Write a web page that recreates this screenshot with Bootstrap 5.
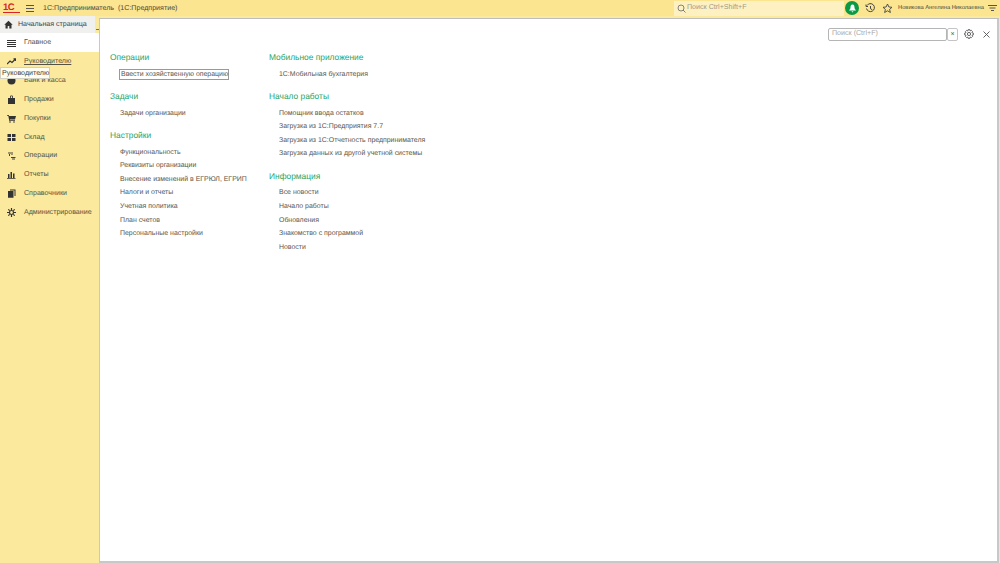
<!DOCTYPE html>
<html lang="ru"><head><meta charset="utf-8"><title>1С</title>
<link href="https://cdn.jsdelivr.net/npm/bootstrap@5.3.0/dist/css/bootstrap.min.css" rel="stylesheet">
<style>
html,body{height:563px;overflow:hidden}
body{background:#fbe99d;font-family:"Liberation Sans",Arial,sans-serif;font-size:7px;color:#4a4a4a;line-height:1;text-rendering:geometricPrecision}
.shell{width:1000px;height:563px;position:relative}
.topbar{height:16px;background:#fbe591}
.logo-txt{color:#d8232a;font-weight:700;font-size:9.5px;width:17px;margin-left:3px;letter-spacing:-.5px;border-bottom:1px solid #d8232a;line-height:9px}
.burger{width:8px;height:7px;margin-left:6px;border-top:1px solid #555;border-bottom:1px solid #555;position:relative}
.burger::after{content:"";position:absolute;left:0;right:0;top:2px;height:1px;background:#555}
.app-title{margin-left:9px;font-size:7.1px;color:#4a4a40;padding-top:1px}
.top-search{width:170px;height:15px;background:#fdf1c1;color:#9a9a8a;font-size:7.1px;padding-left:3px;gap:1px}
.bell{width:14px;height:14px;border-radius:50%;background:#0a9a45;margin-left:1px}
.user-name{font-size:5.75px;color:#4a4a40;margin-left:5px;width:90px;white-space:nowrap;padding-top:1px}
.work{height:547px}
.side{width:99px;flex:none}
.home-tab{height:17px;width:95px;background:#f0f0ee;font-size:7.1px;color:#444;padding-left:4px;gap:5px}
.side-item{height:18.8px;padding-left:7px;gap:8px;font-size:7.1px;color:#55523f;white-space:nowrap;padding-top:1px}
.side-item svg{flex:none}
.side-item.on{background:#fff;height:19px}
.u-line{text-decoration:underline}
.panel-wrap{flex:1;min-width:0;padding:2px 1px 0 0}
.panel{height:545px;background:#fff;border:1px solid #c8c8c8;border-right-width:2px;border-bottom-width:2px;border-top-color:#bdbdbd}
.tool-row{height:14px;margin-top:8px;padding-right:7px}
.find{width:119px;height:13px;border:1px solid #b5b5b5;border-radius:2px;color:#a8a8a8;font-size:7.1px;padding-left:3px}
.find-x{width:11px;height:13px;border:1px solid #c4c4c4;border-radius:2px;font-size:7px;color:#555}
.gear-wrap{margin-left:6px}
.close-x{margin-left:9px}
.cols{padding:10px 0 0 10px}
.col1{width:159px}
.sec-h{color:#1fa568;font-size:8.4px;height:12px;line-height:12px;margin-bottom:4.5px;white-space:nowrap}
.sec{margin-bottom:9px}
.lnk{height:13.6px;line-height:13.6px;padding-left:10px;font-size:6.95px;color:#5a564c;white-space:nowrap}
.lnk.boxed{display:inline-block;height:11px;line-height:9px;margin:1px 0 1.6px 9px;border:1px solid #999;padding:0 0 0 1px}
.lnk.bl{color:#465a72}
.tip{position:absolute;left:0;top:67px;width:50px;height:12px;background:#fffdf0;border:1px solid #d0d0c4;font-size:7.1px;color:#444;line-height:10px;padding-left:1px;white-space:nowrap}
.tab-tick{position:absolute;left:96px;top:29px;width:3px;height:1px;background:#18a060}
</style></head><body>
<div class="shell">
 <div class="topbar d-flex align-items-center">
  <span class="logo-txt">1С</span><span class="burger"></span>
  <span class="app-title">1С:Предприниматель &nbsp;(1С:Предприятие)</span>
  <div class="top-search d-flex align-items-center ms-auto">
   <svg width="9" height="9" viewBox="0 0 9 9" fill="none" stroke="#666" stroke-width=".8"><circle cx="4" cy="4" r="3"/><path d="M6 6l2.500 2.500"/></svg>Поиск Ctrl+Shift+F</div>
  <span class="bell d-flex align-items-center justify-content-center"><svg width="9" height="9" viewBox="0 0 9 9" fill="#fff"><path d="M4.500 .5C2.800 .5 2.500 2 2.500 3.500 2.500 5 1.500 5.500 1 6.500H8C7.500 5.500 6.500 5 6.500 3.500 6.500 2 6.200 .5 4.500 .5ZM3.500 7.200H5.500L4.500 8.600Z"/></svg></span>
  <svg style="margin-left:6px" width="11" height="11" viewBox="0 0 11 11" fill="none" stroke="#444" stroke-width="1"><path d="M2 2.500A4 4 0 1 1 1.500 5.500"/><path d="M1 1.500V3.500H3M5.500 3V5.700L7.300 6.800"/></svg>
  <svg style="margin-left:6px" width="11" height="11" viewBox="0 0 11 11" fill="none" stroke="#444" stroke-width=".9"><path d="M5.500 1l1.400 3 3.100.3-2.400 2.100.8 3.100-2.900-1.700-2.900 1.700.8-3.100L1 4.300 4.100 4z"/></svg>
  <span class="user-name">Новикова Ангелина Николаевна</span>
  <svg style="margin-right:3px" width="9" height="8" viewBox="0 0 9 8" stroke="#555" stroke-width="1"><path d="M0 1.500H9M1.500 4H7.500M3 6.500H6"/></svg>
 </div>
 <div class="work d-flex">
  <div class="side">
   <div class="home-tab d-flex align-items-center">
    <svg width="9" height="9" viewBox="0 0 9 9" fill="#333"><path d="M4.500 .8L.3 4.800H1.500V8.500H3.700V6H5.300V8.500H7.500V4.800H8.700Z"/></svg>Начальная страница</div>
   <div class="side-item on d-flex align-items-center">
    <svg width="9" height="9" viewBox="0 0 9 9" stroke="#333" stroke-width="1"><path d="M0 1.500H9M0 3.500H9M0 5.500H9M0 7.500H9"/></svg>Главное</div>
   <div class="side-item d-flex align-items-center">
    <svg width="9" height="9" viewBox="0 0 9 9" fill="none" stroke="#333" stroke-width="1.200"><path d="M0 7L3 4 5 5.500 8.500 2M6.500 1.800H8.700V4"/></svg><span class="u-line">Руководителю</span></div>
   <div class="side-item d-flex align-items-center">
    <svg width="9" height="9" viewBox="0 0 9 9" fill="#333"><circle cx="4.500" cy="4.500" r="4"/></svg>Банк и касса</div>
   <div class="side-item d-flex align-items-center">
    <svg width="9" height="9" viewBox="0 0 9 9" fill="#333"><path d="M1 3H8V9H1ZM3 3V1.500C3 .3 6 .3 6 1.500V3H5.200V1.600C5.200 1 3.800 1 3.800 1.600V3Z"/></svg>Продажи</div>
   <div class="side-item d-flex align-items-center">
    <svg width="9" height="9" viewBox="0 0 9 9" fill="#333"><path d="M0 1H1.800L2.100 2H9L8 5.500H2.800L3 6.300H8V7H2.300L1.300 1.700H0Z"/><circle cx="3" cy="8" r=".8"/><circle cx="7" cy="8" r=".8"/></svg>Покупки</div>
   <div class="side-item d-flex align-items-center">
    <svg width="9" height="9" viewBox="0 0 9 9" fill="#333"><path d="M.5 1H4V4H.5ZM5 1H8.500V4H5ZM.5 5H4V8H.5ZM5 5H8.500V8H5Z"/></svg>Склад</div>
   <div class="side-item d-flex align-items-center">
    <svg width="9" height="9" viewBox="0 0 9 9" fill="#444"><path d="M1 1.500H4V2.500H1ZM2 3H3V5H2ZM4 6H8.500V7H4ZM5 7.500H8V8.500H5ZM4.500 1H5.500V4H4.500Z"/></svg>Операции</div>
   <div class="side-item d-flex align-items-center">
    <svg width="9" height="9" viewBox="0 0 9 9" fill="#333"><path d="M1 4H2.500V8H1ZM3.500 2H5V8H3.500ZM6 3.500H7.500V8H6ZM0 8H8.500V8.700H0Z"/></svg>Отчеты</div>
   <div class="side-item d-flex align-items-center">
    <svg width="9" height="9" viewBox="0 0 9 9" fill="#333"><path d="M3 .5H8.500V7H7.500V1.500H3ZM1 2H6.500V8.800H1Z"/></svg>Справочники</div>
   <div class="side-item d-flex align-items-center">
    <svg width="9" height="9" viewBox="0 0 9 9" fill="none" stroke="#333" stroke-width="1.200"><circle cx="4.500" cy="4.500" r="2"/><path d="M4.500 0V2M4.500 7V9M0 4.500H2M7 4.500H9M1.300 1.300L2.700 2.700M6.300 6.300L7.700 7.700M1.300 7.700L2.700 6.300M6.300 2.700L7.700 1.300"/></svg>Администрирование</div>
  </div>
  <div class="panel-wrap">
   <div class="panel">
    <div class="tool-row d-flex align-items-center justify-content-end">
     <div class="find d-flex align-items-center">Поиск (Ctrl+F)</div>
     <div class="find-x d-flex align-items-center justify-content-center">×</div>
     <svg class="gear-wrap" width="10" height="10" viewBox="0 0 10 10" fill="none" stroke="#555" stroke-width=".9"><circle cx="5" cy="5" r="1.600"/><path d="M4.200 .6H5.800L6.100 1.900 7.300 1.300 8.500 2.500 7.900 3.700 9.400 4.200V5.800L8 6.200 8.600 7.400 7.400 8.600 6.200 8 5.800 9.400H4.200L3.800 8 2.600 8.600 1.400 7.400 2 6.200.6 5.800V4.200L2 3.800 1.400 2.600 2.600 1.400 3.800 2Z"/></svg>
     <svg class="close-x" width="7" height="7" viewBox="0 0 7 7" stroke="#555" stroke-width=".9"><path d="M.5 .5L6.500 6.500M6.500 .5L.5 6.500"/></svg>
    </div>
    <div class="cols d-flex">
     <div class="col1">
      <div class="sec"><div class="sec-h">Операции</div><div class="lnk boxed">Ввести хозяйственную операцию</div></div>
      <div class="sec"><div class="sec-h">Задачи</div><div class="lnk">Задачи организации</div></div>
      <div class="sec"><div class="sec-h">Настройки</div>
       <div class="lnk">Функциональность</div><div class="lnk">Реквизиты организации</div><div class="lnk">Внесение изменений в ЕГРЮЛ, ЕГРИП</div><div class="lnk bl">Налоги и отчеты</div><div class="lnk">Учетная политика</div><div class="lnk">План счетов</div><div class="lnk">Персональные настройки</div></div>
     </div>
     <div>
      <div class="sec"><div class="sec-h">Мобильное приложение</div><div class="lnk">1С:Мобильная бухгалтерия</div></div>
      <div class="sec"><div class="sec-h">Начало работы</div><div class="lnk">Помощник ввода остатков</div><div class="lnk">Загрузка из 1С:Предприятия 7.7</div><div class="lnk">Загрузка из 1С:Отчетность предпринимателя</div><div class="lnk">Загрузка данных из другой учетной системы</div></div>
      <div class="sec"><div class="sec-h">Информация</div><div class="lnk">Все новости</div><div class="lnk">Начало работы</div><div class="lnk">Обновления</div><div class="lnk">Знакомство с программой</div><div class="lnk">Новости</div></div>
     </div>
    </div>
   </div>
  </div>
 </div>
 <div class="tip">Руководителю</div>
 <div class="tab-tick"></div>
</div>
</body></html>
